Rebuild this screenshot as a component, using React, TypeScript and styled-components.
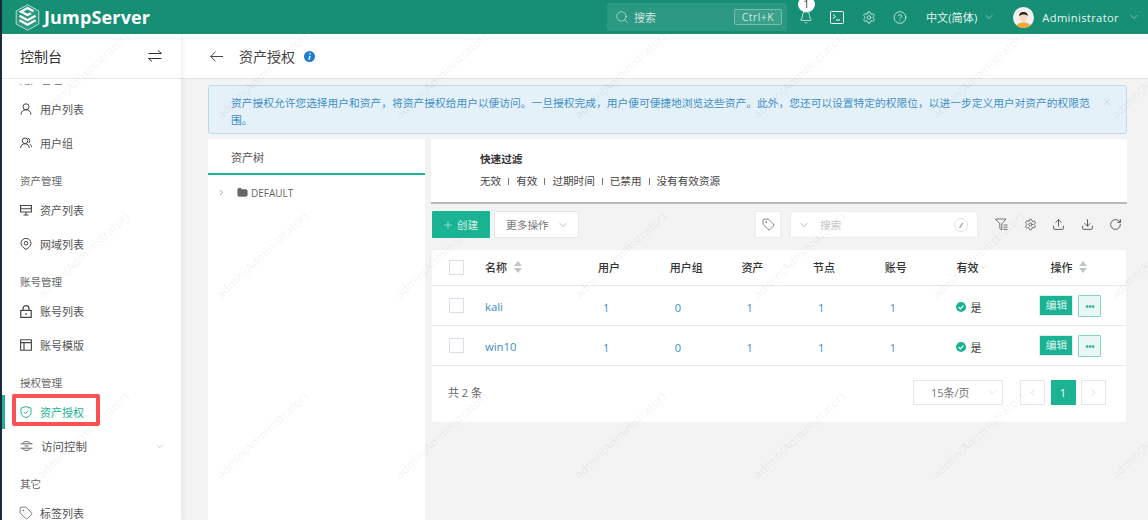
import styled, { createGlobalStyle } from 'styled-components'
import {
  ChevronDown,
  ChevronLeft,
  ChevronRight,
  CircleHelp,
  Download,
  Folder,
  Plus,
  RotateCw,
  Search,
  Settings,
  Tag,
  Upload,
  X,
  Bell,
} from 'lucide-react'

const GREEN = '#1ab394'
const LINK = '#428bca'
const FONT = `"Open Sans", "Noto Sans", "Noto Sans CJK SC", sans-serif`

const GlobalStyle = createGlobalStyle`
  html, body { margin: 0; padding: 0; height: 100%; }
  body { font-family: ${FONT}; overflow: hidden; background: #1c2a3f; }
  * { box-sizing: border-box; }
`

const LogoMark = () => (
  <svg width="25" height="27" viewBox="0 0 25 27" fill="none" stroke="#fff">
    <path d="M12.5 .8 L23.8 7 V20 L12.5 26.2 L1.2 20 V7 Z" strokeWidth="1" fill="rgba(255,255,255,.14)" opacity=".7" />
    <path d="M18.5 7.2 L12.5 4 L6 7.6 L12.5 11 L16 9.2" strokeWidth="2.2" />
    <path d="M4.5 11.8 L12.5 16.2 L20.5 11.8" strokeWidth="2.2" />
    <path d="M4.5 16.2 L12.5 20.8 L20.5 16.2" strokeWidth="2.2" />
  </svg>
)

const Avatar = () => (
  <svg width="21" height="21" viewBox="0 0 21 21">
    <circle cx="10.5" cy="10.5" r="10.5" fill="#f4f2ee" />
    <path d="M3.5 18.4 C4.5 14.5 16.5 14.5 17.5 18.4 A10.5 10.5 0 0 1 3.5 18.4Z" fill="#f2a73b" />
    <ellipse cx="10.5" cy="10" rx="4" ry="5" fill="#fbd9c0" />
    <path d="M6.2 9 C5.6 3.5 15.4 3.5 14.8 9 C13.5 6.8 8 7 6.2 9Z" fill="#2a2320" />
  </svg>
)

const TerminalBox = () => (
  <svg width="14" height="13" viewBox="0 0 14 13" fill="none" stroke="#fff" strokeWidth="1">
    <rect x="0.5" y="0.5" width="13" height="12" rx="1" />
    <path d="M3 3.5 L5.5 5.5 L3 7.5 M6 9 H10" />
  </svg>
)

const SwapIcon = () => (
  <svg width="14" height="12" viewBox="0 0 14 12" fill="none" stroke="#333" strokeWidth="1">
    <path d="M.5 3.5 H13.5 L10 .5 M13.5 8.5 H.5 L4 11.5" />
  </svg>
)

const BackArrow = () => (
  <svg width="13" height="11" viewBox="0 0 13 11" fill="none" stroke="#444" strokeWidth="1">
    <path d="M13 5.5 H.8 M5.5 .6 L.8 5.5 L5.5 10.4" />
  </svg>
)

const UserIcon = () => (
  <svg width="12" height="12" viewBox="0 0 12 12" fill="none" stroke="#444" strokeWidth="1">
    <circle cx="6" cy="3.8" r="3" />
    <path d="M1 11.6 C1 8.4 3.4 6.8 6 6.8 C8.6 6.8 11 8.4 11 11.6" />
  </svg>
)

const UsersIcon = () => (
  <svg width="12" height="12" viewBox="0 0 12 12" fill="none" stroke="#444" strokeWidth="1">
    <circle cx="5" cy="3.8" r="2.8" />
    <path d="M.6 11 C.6 8.2 2.6 6.8 5 6.8 C7.4 6.8 9.2 8.2 9.2 11 M8 1.2 C10 1.6 10.4 5 8.6 6 M9.8 7.2 C11 7.8 11.6 9 11.6 10.2" />
  </svg>
)

const MonitorIcon = () => (
  <svg width="12" height="12" viewBox="0 0 12 12" fill="none" stroke="#444" strokeWidth="1.1">
    <path d="M.6 1.5 H11.4 V8 H.6 Z M.6 4.8 H11.4 M6 8 V11 M3.5 11 H8.5" />
  </svg>
)

const PinIcon = () => (
  <svg width="12" height="12" viewBox="0 0 12 12" fill="none" stroke="#444" strokeWidth="1">
    <path d="M6 11.5 C3 9.6 1 7.6 1 5.2 A5 4.8 0 0 1 11 5.2 C11 7.6 9 9.6 6 11.5Z" />
    <circle cx="6" cy="5.2" r="1.8" />
  </svg>
)

const LockIcon = () => (
  <svg width="12" height="13" viewBox="0 0 12 13" fill="none" stroke="#444" strokeWidth="1.2">
    <rect x=".8" y="5.4" width="10.4" height="7" />
    <path d="M3 5.4 V3.6 A3 3 0 0 1 9 3.6 V5.4 M6 8 V10" />
  </svg>
)

const TemplateIcon = () => (
  <svg width="12" height="12" viewBox="0 0 12 12" fill="none" stroke="#444" strokeWidth="1.1">
    <path d="M.6 .8 H11.4 V11.2 H.6 Z M.6 3.6 H11.4 M4 3.6 V11.2" />
  </svg>
)

const ShieldIcon = () => (
  <svg width="12" height="12" viewBox="0 0 12 12" fill="none" stroke={GREEN} strokeWidth="1">
    <path d="M6 .6 L11 2.2 V6.5 C11 9 8.5 10.8 6 11.6 C3.5 10.8 1 9 1 6.5 V2.2Z" />
    <path d="M3.8 6 L5.4 7.6 L8.4 4.6" />
  </svg>
)

const AccessIcon = () => (
  <svg width="13" height="12" viewBox="0 0 13 12" fill="none" stroke="#555" strokeWidth=".9">
    <path d="M3 3.5 C3.4 .8 9.6 .8 10 3.5 M3 8.5 C3.4 11.2 9.6 11.2 10 8.5 M.5 3.8 H12.5 M.5 8.2 H12.5 M4.5 6 H8.5" />
  </svg>
)

const ColumnFilterIcon = () => (
  <svg width="13" height="13" viewBox="0 0 13 13" fill="none" stroke="#555" strokeWidth=".8">
    <path d="M.5 1 H11 L6.8 5.8 V12 L4.8 10.6 V5.8 Z M8.4 7 H12.5 M8.4 9.2 H12.5 M8.4 11.4 H12.5" />
  </svg>
)

const SortIcon = () => (
  <svg width="8" height="12" viewBox="0 0 8 12" fill="#c0c4cc">
    <path d="M4 0 L8 5 H0 Z M0 7 H8 L4 12 Z" />
  </svg>
)

const CheckBadge = () => (
  <svg width="10" height="10" viewBox="0 0 10 10">
    <circle cx="5" cy="5" r="5" fill={GREEN} />
    <path d="M2.6 5.1 L4.4 6.9 L7.5 3.6" fill="none" stroke="#fff" strokeWidth="1.3" />
  </svg>
)

const InfoBadge = () => (
  <svg width="11" height="11" viewBox="0 0 11 11">
    <circle cx="5.5" cy="5.5" r="5.5" fill="#1c7cd0" />
    <path d="M6 2.2 V3.4 M5.9 4.8 L5 8.6" stroke="#fff" strokeWidth="1.5" />
  </svg>
)

const Page = styled.div`
  height: 100vh;
  margin-left: 2px;
  display: flex;
  flex-direction: column;
  overflow: hidden;
  background: #f3f3f4;
`

const TopBar = styled.header`
  position: relative;
  z-index: 3;
  flex: 0 0 34px;
  display: flex;
  align-items: center;
  background: #168f75;
  color: #fff;
  padding-left: 13px;
`

const Brand = styled.div`
  display: flex;
  align-items: center;
  gap: 4px;
  font-family: "Open Sans", "Noto Sans", sans-serif;
  font-size: 18px;
  font-weight: 700;
  letter-spacing: 0.15px;
`

const SearchBox = styled.div`
  margin-left: auto;
  width: 180px;
  height: 28px;
  border-radius: 3px;
  background: rgba(255, 255, 255, 0.09);
  display: flex;
  align-items: center;
  padding-left: 8px;
  gap: 5px;
  font-size: 11px;
  color: rgba(255, 255, 255, 0.75);
`

const KeyHint = styled.span`
  margin-left: auto;
  margin-right: 5px;
  border: 1px solid rgba(255, 255, 255, 0.3);
  border-radius: 2px;
  background: rgba(255, 255, 255, 0.08);
  height: 16px;
  width: 48px;
  line-height: 14px;
  text-align: center;
  font-size: 10.5px;
  letter-spacing: 0.4px;
`

const TopIcons = styled.div`
  display: flex;
  align-items: center;
  gap: 17.33px;
  margin-left: 12px;
`

const TopIcon = styled.span`
  position: relative;
  display: flex;
  width: 14px;
  justify-content: center;
`

const Badge = styled.span`
  position: absolute;
  top: -13px;
  left: -1px;
  width: 17px;
  height: 15px;
  border-radius: 8px;
  background: #fff;
  color: #333;
  font-size: 10px;
  line-height: 15px;
  text-align: center;
`

const Lang = styled.span`
  display: flex;
  align-items: center;
  gap: 6px;
  margin-left: 19px;
  font-size: 11.2px;
  color: rgba(255, 255, 255, 0.92);
`

const UserMenu = styled.span`
  display: flex;
  align-items: center;
  margin-left: 18px;
  margin-right: 8px;
  font-size: 11.2px;
  color: rgba(255, 255, 255, 0.92);
  letter-spacing: 0.35px;
  svg:first-child { margin-right: 8px; }
  svg:last-child { margin-left: 9px; }
`

const Body = styled.div`
  position: relative;
  flex: 1;
  display: flex;
  min-height: 0;
`

const Watermarks = styled.div`
  position: absolute;
  z-index: 2;
  left: -9px;
  top: -49px;
  display: grid;
  grid-template-columns: repeat(7, 179px);
  grid-auto-rows: 180px;
  pointer-events: none;
`

const Mark = styled.span`
  display: flex;
  align-items: center;
  justify-content: center;
  white-space: nowrap;
  font-size: 12px;
  color: rgba(0, 0, 0, 0.07);
  transform: rotate(-43deg);
`

const Sidebar = styled.aside`
  flex: 0 0 179px;
  background: #fff;
  display: flex;
  flex-direction: column;
  box-shadow: 1px 0 5px rgba(0, 0, 0, 0.08);
  position: relative;
  z-index: 1;
`

const SideHead = styled.div`
  flex: 0 0 45px;
  display: flex;
  align-items: center;
  justify-content: space-between;
  padding: 0 19px 0 18px;
  font-size: 14px;
  color: #333;
  border-bottom: 1px solid #e7e7e7;
`

const SideList = styled.nav`
  flex: 1;
  overflow: hidden;
  margin-top: 5px;
`

const SideInner = styled.div`
  margin-top: -25px;
`

const GroupLabel = styled.div`
  height: 33px;
  padding: 14px 0 0 18px;
  font-size: 10.5px;
  line-height: 14px;
  color: #666;
`

const SideItem = styled.div<{ $active?: boolean }>`
  position: relative;
  height: 34px;
  display: flex;
  align-items: center;
  gap: 8px;
  padding: 0 18px;
  font-size: 11px;
  color: ${(p) => (p.$active ? GREEN : '#555')};
  border-left: ${(p) => (p.$active ? `3px solid ${GREEN}` : 'none')};
  padding-left: ${(p) => (p.$active ? '15px' : '18px')};
  svg:first-child { flex: 0 0 auto; }
  svg.lucide:first-child { margin: -1px; }
`

const Highlight = styled.span`
  position: absolute;
  left: 7px;
  top: -1px;
  width: 88px;
  height: 32px;
  border: 4px solid #fa5252;
  border-radius: 2px;
`

const Expand = styled.span`
  margin-left: auto;
  margin-right: -1px;
  display: flex;
`

const AccessLabel = styled.span`
  font-size: 11.5px;
`

const Main = styled.main`
  flex: 1;
  display: flex;
  flex-direction: column;
  min-width: 0;
`

const PageHead = styled.div`
  flex: 0 0 45px;
  background: #fff;
  border-bottom: 1px solid #e2e2e2;
  display: flex;
  align-items: center;
  padding-left: 29px;
  font-size: 14px;
  color: #444;
`

const Title = styled.span`
  margin: 0 9px 0 16px;
`

const Content = styled.div`
  flex: 1;
  padding: 6px 21px 0 27px;
  display: flex;
  flex-direction: column;
  gap: 5px;
  min-height: 0;
`

const Alert = styled.div`
  flex: 0 0 49px;
  display: flex;
  background: #e5f1f8;
  border: 1px solid #bcdaed;
  border-radius: 3px;
  padding: 9px 15px 0 22px;
  font-size: 10.74px;
  line-height: 16.5px;
  color: #3d8fc8;
`

const AlertText = styled.div`
  width: 865px;
`

const AlertClose = styled.span`
  margin-left: auto;
  margin-right: -1px;
  color: #b9c8d2;
`

const Split = styled.div`
  flex: 1;
  display: flex;
  gap: 6px;
  min-height: 0;
`

const TreePanel = styled.div`
  flex: 0 0 217px;
  background: #fff;
`

const TreeTab = styled.div`
  height: 36px;
  padding: 11px 0 0 23px;
  font-size: 11px;
  line-height: 15px;
  color: #555;
  border-bottom: 2px solid ${GREEN};
`

const TreeNode = styled.div`
  display: flex;
  align-items: center;
  height: 15px;
  margin-top: 10px;
  padding-left: 9px;
  font-size: 10px;
  color: #666;
  gap: 11px;
`

const FolderWrap = styled.span`
  display: flex;
  margin-right: -8px;
`

const ListArea = styled.div`
  flex: 1;
  display: flex;
  flex-direction: column;
  min-width: 0;
`

const QuickFilter = styled.div`
  height: 65px;
  background: #fff;
  border-bottom: 2px solid #b6babd;
  padding: 13px 0 0 49px;
  font-size: 10.6px;
  color: #444;
`

const QuickTitle = styled.div`
  font-weight: 600;
  color: #333;
  line-height: 14px;
`

const QuickRow = styled.div`
  display: flex;
  align-items: center;
  margin-top: 8px;
  line-height: 14px;
`

const QuickSep = styled.span`
  width: 1px;
  height: 7px;
  margin: 0 7px;
  background: #777;
`

const Toolbar = styled.div`
  display: flex;
  align-items: center;
  height: 27px;
  margin-top: 7px;
  padding-left: 1px;
`

const CreateBtn = styled.div`
  width: 58px;
  height: 27px;
  background: ${GREEN};
  color: rgba(255, 255, 255, 0.85);
  display: flex;
  align-items: center;
  justify-content: center;
  gap: 3px;
  padding-right: 2px;
  font-size: 10.7px;
  border-radius: 1px;
`

const MoreBtn = styled.div`
  margin-left: 4px;
  width: 85px;
  height: 27px;
  background: #fff;
  border: 1px solid #e4e6ea;
  border-radius: 2px;
  color: #777;
  display: flex;
  align-items: center;
  gap: 8px;
  padding-left: 11px;
  font-size: 10.7px;
`

const TagBtn = styled.div`
  margin-left: auto;
  width: 26px;
  height: 27px;
  background: #fff;
  border: 1px solid #ececec;
  display: flex;
  align-items: center;
  justify-content: center;
`

const TableSearch = styled.div`
  margin-left: 9px;
  width: 188px;
  height: 27px;
  background: #fff;
  border: 1px solid #ececec;
  border-radius: 3px;
  display: flex;
  align-items: center;
  padding: 0 9px 0 7px;
  font-size: 10.7px;
  color: #c4c7cc;
  gap: 10px;
`

const SlashKey = styled.span`
  margin-left: auto;
  width: 14px;
  height: 14px;
  border: 1px solid #e4e4e4;
  border-radius: 50%;
  color: #333;
  font-size: 8px;
  line-height: 12px;
  text-align: center;
  font-style: italic;
`

const ToolIcons = styled.div`
  margin-left: 17px;
  margin-right: 5px;
  display: flex;
  align-items: center;
  gap: 15.5px;
  color: #333;
`

const Table = styled.div`
  margin: 12px 0 0 1px;
  width: 694px;
  background: #fff;
  border-radius: 0 0 2px 2px;
`

const Row = styled.div<{ $head?: boolean }>`
  display: grid;
  grid-template-columns: 53px 113px repeat(5, 71.7px) 84px 1fr;
  align-items: center;
  height: ${(p) => (p.$head ? '36px' : '40px')};
  border-bottom: 1px solid #e7eaec;
  font-size: 11px;
  color: ${(p) => (p.$head ? '#333' : '#555')};
`

const CheckCell = styled.div`
  display: flex;
  justify-content: center;
  padding-right: 5px;
`

const CheckBox = styled.span`
  width: 15px;
  height: 15px;
  background: #fff;
  border: 1px solid #dcdfe6;
`

const HeadCell = styled.div<{ $pad?: number; $gap?: number }>`
  display: flex;
  align-items: center;
  gap: ${(p) => p.$gap ?? 7}px;
  margin-top: -1px;
  padding-left: ${(p) => p.$pad ?? 0}px;
  font-weight: 500;
`

const NameLink = styled.div`
  color: ${LINK};
  font-size: 11.3px;
  margin-top: 2px;
`

const NumCell = styled.div`
  color: ${LINK};
  padding: 4px 0 0 5px;
  font-size: 11px;
`

const ActiveCell = styled.div`
  display: flex;
  align-items: center;
  gap: 4px;
  padding-top: 3px;
  font-size: 11px;
  color: #444;
`

const Ops = styled.div`
  display: flex;
  align-items: center;
  gap: 5px;
  margin-left: -1px;
`

const EditBtn = styled.span`
  width: 34px;
  height: 21px;
  border: 1px solid #d9f0ea;
  background: ${GREEN};
  color: rgba(255, 255, 255, 0.85);
  font-size: 10.7px;
  line-height: 19px;
  text-align: center;
`

const MoreOps = styled.span`
  width: 23px;
  height: 22px;
  border: 1px solid #83d8c6;
  border-radius: 1px;
  background: #e8f7f4;
  color: ${GREEN};
  font-size: 8px;
  font-weight: 700;
  line-height: 21px;
  text-align: center;
`

const Footer = styled.div`
  height: 56px;
  display: flex;
  align-items: center;
  padding: 0 20px 4px 16px;
  font-size: 11px;
  color: #666;
`

const PageSize = styled.div`
  margin-left: auto;
  width: 90px;
  height: 25px;
  border: 1px solid #e4e6ea;
  display: flex;
  align-items: center;
  justify-content: space-between;
  padding: 0 4px 0 17px;
  color: #777;
`

const PagerBtn = styled.span<{ $active?: boolean }>`
  width: 25px;
  height: 25px;
  margin-left: ${(p) => (p.$active ? '5.5px' : '0')};
  margin-right: ${(p) => (p.$active ? '5.5px' : '0')};
  display: flex;
  align-items: center;
  justify-content: center;
  background: ${(p) => (p.$active ? GREEN : '#fff')};
  border: 1px solid ${(p) => (p.$active ? GREEN : '#e4e6ea')};
  color: ${(p) => (p.$active ? '#fff' : '#bbb')};
  font-size: 11px;
`

const Pager = styled.div`
  display: flex;
  margin-left: 17px;
`

const rows = [{ name: 'kali' }, { name: 'win10' }]

export default function App() {
  return (
    <Page>
      <GlobalStyle />
      <TopBar>
        <Brand>
          <LogoMark />
          JumpServer
        </Brand>
        <SearchBox>
          <Search size={14} strokeWidth={1.2} />
          搜索
          <KeyHint>Ctrl+K</KeyHint>
        </SearchBox>
        <TopIcons>
          <TopIcon>
            <Bell size={15} strokeWidth={1.2} />
            <Badge>1</Badge>
          </TopIcon>
          <TopIcon>
            <TerminalBox />
          </TopIcon>
          <TopIcon>
            <Settings size={15} strokeWidth={1.2} />
          </TopIcon>
          <TopIcon>
            <CircleHelp size={15} strokeWidth={1.2} />
          </TopIcon>
        </TopIcons>
        <Lang>
          中文(简体)
          <ChevronDown size={12} strokeWidth={1} />
        </Lang>
        <UserMenu>
          <Avatar />
          Administrator
          <ChevronDown size={12} strokeWidth={1} />
        </UserMenu>
      </TopBar>
      <Body>
        <Sidebar>
          <SideHead>
            控制台
            <SwapIcon />
          </SideHead>
          <SideList>
            <SideInner>
              <GroupLabel>用户管理</GroupLabel>
              <SideItem><UserIcon />用户列表</SideItem>
              <SideItem><UsersIcon />用户组</SideItem>
              <GroupLabel>资产管理</GroupLabel>
              <SideItem><MonitorIcon />资产列表</SideItem>
              <SideItem><PinIcon />网域列表</SideItem>
              <GroupLabel>账号管理</GroupLabel>
              <SideItem><LockIcon />账号列表</SideItem>
              <SideItem><TemplateIcon />账号模版</SideItem>
              <GroupLabel>授权管理</GroupLabel>
              <SideItem $active>
                <ShieldIcon />
                资产授权
                <Highlight />
              </SideItem>
              <SideItem>
                <AccessIcon />
                <AccessLabel>访问控制</AccessLabel>
                <Expand><ChevronDown size={11} strokeWidth={1} color="#999" /></Expand>
              </SideItem>
              <GroupLabel>其它</GroupLabel>
              <SideItem><Tag size={14} strokeWidth={1.2} color="#444" />标签列表</SideItem>
            </SideInner>
          </SideList>
        </Sidebar>
        <Main>
          <PageHead>
            <BackArrow />
            <Title>资产授权</Title>
            <InfoBadge />
          </PageHead>
          <Content>
            <Alert>
              <AlertText>
                资产授权允许您选择用户和资产，将资产授权给用户以便访问。一旦授权完成，用户便可便捷地浏览这些资产。此外，您还可以设置特定的权限位，以进一步定义用户对资产的权限范围。
              </AlertText>
              <AlertClose><X size={10} strokeWidth={1.4} /></AlertClose>
            </Alert>
            <Split>
              <TreePanel>
                <TreeTab>资产树</TreeTab>
                <TreeNode>
                  <ChevronRight size={9} strokeWidth={1.4} color="#555" />
                  <FolderWrap><Folder size={11} fill="#666" color="#666" /></FolderWrap>
                  DEFAULT
                </TreeNode>
              </TreePanel>
              <ListArea>
                <QuickFilter>
                  <QuickTitle>快速过滤</QuickTitle>
                  <QuickRow>
                    无效<QuickSep />有效<QuickSep />过期时间<QuickSep />已禁用<QuickSep />没有有效资源
                  </QuickRow>
                </QuickFilter>
                <Toolbar>
                  <CreateBtn><Plus size={12} strokeWidth={1.2} />创建</CreateBtn>
                  <MoreBtn>更多操作<ChevronDown size={12} strokeWidth={1} /></MoreBtn>
                  <TagBtn><Tag size={13} strokeWidth={1.2} color="#444" /></TagBtn>
                  <TableSearch>
                    <ChevronDown size={12} strokeWidth={1} color="#777" />
                    搜索
                    <SlashKey>/</SlashKey>
                  </TableSearch>
                  <ToolIcons>
                    <ColumnFilterIcon />
                    <Settings size={13} strokeWidth={1.3} />
                    <Upload size={13} strokeWidth={1.4} />
                    <Download size={13} strokeWidth={1.4} />
                    <RotateCw size={13} strokeWidth={1.4} />
                  </ToolIcons>
                </Toolbar>
                <Table>
                  <Row $head>
                    <CheckCell><CheckBox /></CheckCell>
                    <HeadCell>名称 <SortIcon /></HeadCell>
                    <HeadCell>用户</HeadCell>
                    <HeadCell>用户组</HeadCell>
                    <HeadCell>资产</HeadCell>
                    <HeadCell>节点</HeadCell>
                    <HeadCell>账号</HeadCell>
                    <HeadCell $gap={0}>
                      有效<ChevronDown size={10} strokeWidth={1.4} color="#a0e0d5" />
                    </HeadCell>
                    <HeadCell $pad={10}>操作 <SortIcon /></HeadCell>
                  </Row>
                  {rows.map((r) => (
                    <Row key={r.name}>
                      <CheckCell><CheckBox /></CheckCell>
                      <NameLink>{r.name}</NameLink>
                      <NumCell>1</NumCell>
                      <NumCell>0</NumCell>
                      <NumCell>1</NumCell>
                      <NumCell>1</NumCell>
                      <NumCell>1</NumCell>
                      <ActiveCell><CheckBadge />是</ActiveCell>
                      <Ops>
                        <EditBtn>编辑</EditBtn>
                        <MoreOps>•••</MoreOps>
                      </Ops>
                    </Row>
                  ))}
                  <Footer>
                    共 2 条
                    <PageSize>15条/页<ChevronDown size={11} strokeWidth={1} color="#bbb" /></PageSize>
                    <Pager>
                      <PagerBtn><ChevronLeft size={11} strokeWidth={1.2} /></PagerBtn>
                      <PagerBtn $active>1</PagerBtn>
                      <PagerBtn><ChevronRight size={11} strokeWidth={1.2} /></PagerBtn>
                    </Pager>
                  </Footer>
                </Table>
              </ListArea>
            </Split>
          </Content>
        </Main>
        <Watermarks>
          {Array.from({ length: 21 }, (_, i) => (
            <Mark key={i}>admin(Administrator)</Mark>
          ))}
        </Watermarks>
      </Body>
    </Page>
  )
}
